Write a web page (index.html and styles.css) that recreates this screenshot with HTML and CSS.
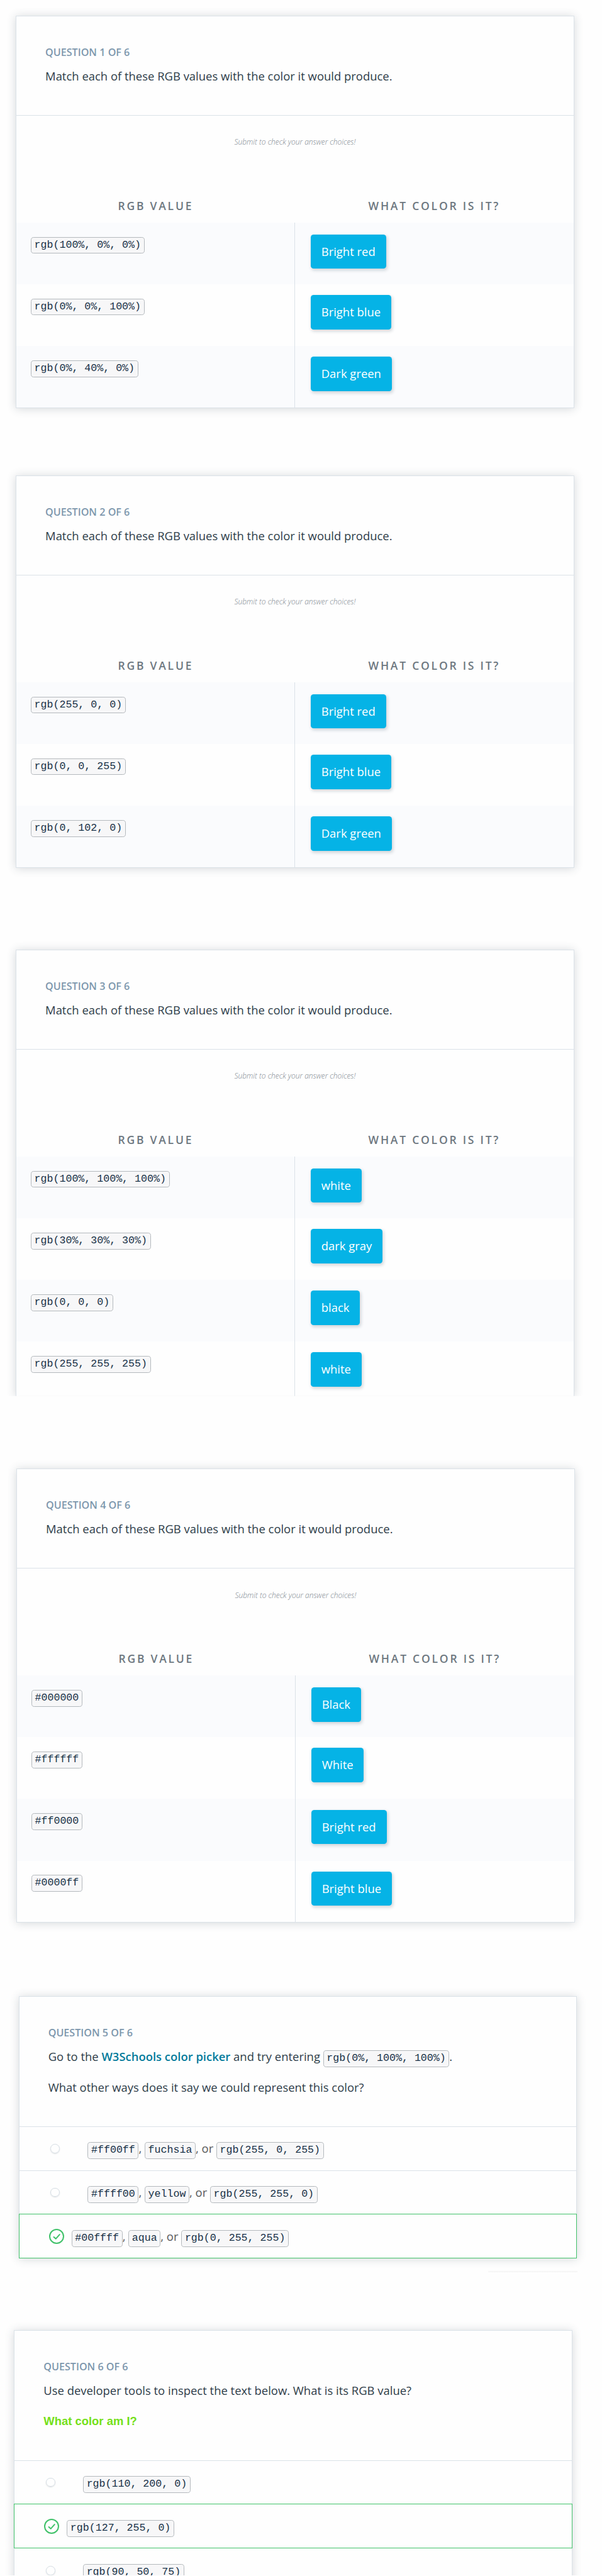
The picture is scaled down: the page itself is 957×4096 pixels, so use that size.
FILE: index.html
```html
<!DOCTYPE html>
<html lang="en">
<head>
<meta charset="utf-8">
<title>Color quiz</title>
<link rel="stylesheet" href="styles.css">
</head>
<body>
<main class="page">

<section class="card card-1">
  <header class="head"><h2 class="count">QUESTION 1 OF 6</h2><p class="prompt">Match each of these RGB values with the color it would produce.</p></header>
  <p class="hint">Submit to check your answer choices!</p>
  <div class="titles"><span>RGB VALUE</span><span>WHAT COLOR IS IT?</span></div>
  <div class="row"><div class="cell"><code>rgb(100%, 0%, 0%)</code></div><div class="cell"><button class="chip">Bright red</button></div></div>
  <div class="row"><div class="cell"><code>rgb(0%, 0%, 100%)</code></div><div class="cell"><button class="chip">Bright blue</button></div></div>
  <div class="row"><div class="cell"><code>rgb(0%, 40%, 0%)</code></div><div class="cell"><button class="chip">Dark green</button></div></div>
</section>

<section class="card card-2">
  <header class="head"><h2 class="count">QUESTION 2 OF 6</h2><p class="prompt">Match each of these RGB values with the color it would produce.</p></header>
  <p class="hint">Submit to check your answer choices!</p>
  <div class="titles"><span>RGB VALUE</span><span>WHAT COLOR IS IT?</span></div>
  <div class="row"><div class="cell"><code>rgb(255, 0, 0)</code></div><div class="cell"><button class="chip">Bright red</button></div></div>
  <div class="row"><div class="cell"><code>rgb(0, 0, 255)</code></div><div class="cell"><button class="chip">Bright blue</button></div></div>
  <div class="row"><div class="cell"><code>rgb(0, 102, 0)</code></div><div class="cell"><button class="chip">Dark green</button></div></div>
</section>

<section class="card card-3">
  <header class="head"><h2 class="count">QUESTION 3 OF 6</h2><p class="prompt">Match each of these RGB values with the color it would produce.</p></header>
  <p class="hint">Submit to check your answer choices!</p>
  <div class="titles"><span>RGB VALUE</span><span>WHAT COLOR IS IT?</span></div>
  <div class="row"><div class="cell"><code>rgb(100%, 100%, 100%)</code></div><div class="cell"><button class="chip">white</button></div></div>
  <div class="row"><div class="cell"><code>rgb(30%, 30%, 30%)</code></div><div class="cell"><button class="chip">dark gray</button></div></div>
  <div class="row"><div class="cell"><code>rgb(0, 0, 0)</code></div><div class="cell"><button class="chip">black</button></div></div>
  <div class="row row-cut"><div class="cell"><code>rgb(255, 255, 255)</code></div><div class="cell"><button class="chip">white</button></div></div>
</section>

<section class="card card-4">
  <header class="head"><h2 class="count">QUESTION 4 OF 6</h2><p class="prompt">Match each of these RGB values with the color it would produce.</p></header>
  <p class="hint">Submit to check your answer choices!</p>
  <div class="titles"><span>RGB VALUE</span><span>WHAT COLOR IS IT?</span></div>
  <div class="row"><div class="cell"><code>#000000</code></div><div class="cell"><button class="chip">Black</button></div></div>
  <div class="row"><div class="cell"><code>#ffffff</code></div><div class="cell"><button class="chip">White</button></div></div>
  <div class="row"><div class="cell"><code>#ff0000</code></div><div class="cell"><button class="chip">Bright red</button></div></div>
  <div class="row"><div class="cell"><code>#0000ff</code></div><div class="cell"><button class="chip">Bright blue</button></div></div>
</section>

<section class="card card-5">
  <header class="head"><h2 class="count">QUESTION 5 OF 6</h2>
    <p class="prompt">Go to the <a class="link">W3Schools color picker</a> and try entering <code>rgb(0%, 100%, 100%)</code>.</p>
    <p class="prompt">What other ways does it say we could represent this color?</p></header>
  <div class="choice"><i class="radio"></i><p><code>#ff00ff</code>, <code>fuchsia</code>, or <code>rgb(255, 0, 255)</code></p></div>
  <div class="choice"><i class="radio"></i><p><code>#ffff00</code>, <code>yellow</code>, or <code>rgb(255, 255, 0)</code></p></div>
  <div class="choice correct">
    <svg class="check" viewBox="0 0 26 26"><circle cx="13" cy="13" r="11.9"/><path d="M8.2 14.1l3.4 3.1 6.5-7.3"/></svg>
    <p><code>#00ffff</code>, <code>aqua</code>, or <code>rgb(0, 255, 255)</code></p></div>
</section>
<div class="button-edge"></div>

<section class="card card-6">
  <header class="head"><h2 class="count">QUESTION 6 OF 6</h2>
    <p class="prompt">Use developer tools to inspect the text below. What is its RGB value?</p>
    <p class="prompt sample">What color am I?</p></header>
  <div class="choice"><i class="radio"></i><p><code>rgb(110, 200, 0)</code></p></div>
  <div class="choice correct">
    <svg class="check" viewBox="0 0 26 26"><circle cx="13" cy="13" r="11.9"/><path d="M8.2 14.1l3.4 3.1 6.5-7.3"/></svg>
    <p><code>rgb(127, 255, 0)</code></p></div>
  <div class="choice last"><i class="radio"></i><p><code>rgb(90, 50, 75)</code></p></div>
</section>

</main>
</body>
</html>
```

FILE: styles.css
```css
* { box-sizing: border-box; margin: 0; padding: 0; }
html { background: #fefefe; overflow: hidden; }
body { height: 4096px; overflow: hidden; }

.page {
  zoom: 0.923;
  width: 1037px;
  height: 4437px;
  overflow: hidden;
  display: flex;
  flex-direction: column;
  font-family: "Open Sans", sans-serif;
  color: #2e3d49;
}

.card {
  flex: none;
  width: 962px;
  background: #fefefe;
  border: 1px solid #dbe2e8;
  box-shadow: 0 1px 15px rgba(46, 61, 73, 0.2);
}
.card-1 { height: 676px; margin: 27px 0 0 27px; }
.card-2 { height: 676px; margin: 116px 0 0 27px; }
.card-3 { height: 769px; margin: 141px 0 0 27px; border-bottom: 0; clip-path: inset(-30px -30px 0 -30px); }
.card-4 { height: 782px; margin: 125px 0 0 28px; }
.card-5 { height: 452px; margin: 127px 0 0 32px; }
.card-6 { height: 440px; margin: 100px 0 0 24px; }

.head {
  height: 171.5px;
  padding: 50px 50px 0;
  border-bottom: 1px solid #dbe2e8;
}
.card-5 .head, .card-6 .head { height: 224px; }
.count { font-size: 17.5px; line-height: 24px; font-weight: 600; color: #7d97ad; margin-bottom: 13.5px; }
.prompt { font-size: 20px; line-height: 30px; white-space: nowrap; }
.prompt + .prompt { margin-top: 20px; }
.link { color: #017a9b; font-weight: 600; }
.sample { font-family: "Liberation Sans", sans-serif; font-weight: 700; font-size: 20px; color: #75e019; }
.prompt + .sample { margin-top: 24px; }

.hint {
  height: 143px;
  padding-top: 36px;
  text-align: center;
  font-size: 13px;
  line-height: 20px;
  font-style: italic;
  font-weight: 300;
  color: #7d868e;
}
.titles {
  height: 41px;
  display: grid;
  grid-template-columns: 1fr 1fr;
  text-align: center;
  font-size: 19px;
  line-height: 24px;
  font-weight: 600;
  letter-spacing: 3px;
  color: #6d7780;
}

.row { display: grid; grid-template-columns: 480px 1fr; height: 106.3px; }
.row:nth-child(even) { background: #fafbfd; }
.cell { padding: 18.5px 27px; }
.cell:first-child { padding: 24.5px 25px; border-right: 1px solid #dbe2e8; }
.row:nth-child(4) .chip { margin-top: 2px; }
.row-cut { height: 91px; }

code {
  display: inline-block;
  height: 29px;
  padding: 0 5px;
  border: 1px solid #b4b9bd;
  border-radius: 5px;
  background: #f7f7f8;
  color: #173147;
  font: 18px/25px "Liberation Mono", monospace;
  white-space: nowrap;
}
.cell code { display: block; width: max-content; }

.chip {
  display: block;
  height: 59px;
  padding: 0 18.3px;
  border: 0;
  border-radius: 5px;
  background: #05b3e6;
  box-shadow: 2px 3px 6px rgba(46, 61, 73, 0.2);
  color: #fff;
  font: 20px/59px "Open Sans", sans-serif;
}

.choice {
  display: flex;
  align-items: center;
  height: 75.5px;
  padding-left: 54px;
  border-bottom: 1px solid #dbe2e8;
  font-size: 20px;
  line-height: 30px;
  color: #58595b;
}
.choice p { padding-top: 3px; }
.choice.correct {
  height: 77px;
  margin: -1px -1px 0;
  padding-left: 51px;
  border: 1px solid #42c26b;
  background: #fefefe;
}
.choice.last { border-bottom: 0; }
.radio {
  width: 16px;
  height: 16px;
  margin-right: 48px;
  border: 1px solid #d5dde3;
  border-radius: 50%;
  box-shadow: 0 1px 2px rgba(46, 61, 73, 0.15);
}
.check { width: 26px; height: 26px; margin-right: 13px; fill: none; stroke: #42c26b; stroke-width: 2.2; stroke-linecap: round; stroke-linejoin: round; }

.button-edge {
  flex: none;
  width: 154px;
  height: 3px;
  margin: 20px 0 0 841px;
  background: linear-gradient(#fefefe, #f3f3f3);
}
```
